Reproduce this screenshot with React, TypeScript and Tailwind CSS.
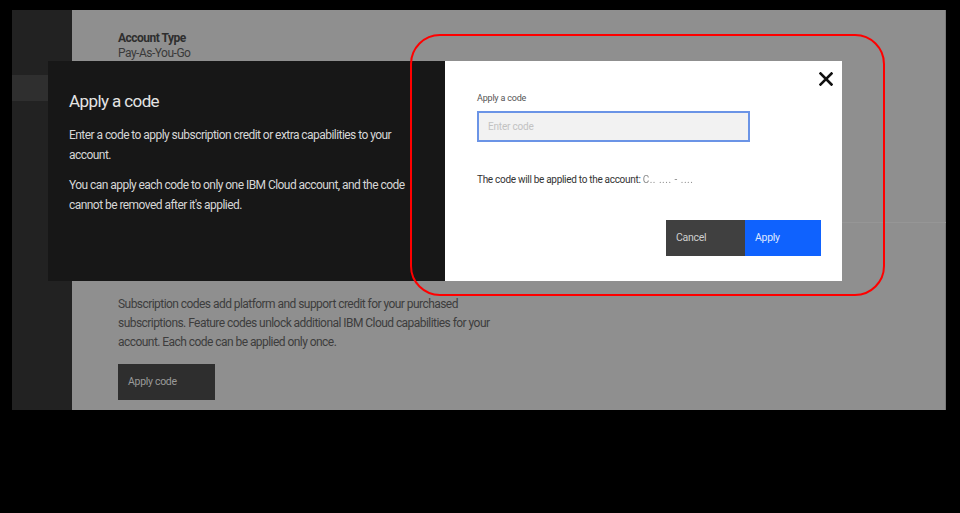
import React from "react";

const font = { fontFamily: 'Roboto, "Liberation Sans", sans-serif' };

export default function App() {
  return (
    <div className="w-[960px] h-[513px] bg-black relative overflow-hidden" style={font}>
      <div className="absolute left-[12px] top-[10px] w-[934px] h-[400px] flex">
        {/* sidebar */}
        <div className="w-[60px] bg-[#222222] flex flex-col">
          <div className="h-[65px]" />
          <div className="h-[26px] bg-[#2f2f2f]" />
        </div>
        {/* content */}
        <div className="flex-1 bg-[#8f8f8f] pl-[46px] flex flex-col border-r border-[#7a7a7a]">
          <div className="pt-[21px] text-[12px] leading-[15px] tracking-[-0.5px] text-[#2e2e2e] font-bold">Account Type</div>
          <div className="text-[12px] leading-[15px] tracking-[-0.5px] text-[#3a3a3a]">Pay-As-You-Go</div>
          <div className="mt-[234px] w-[372px] text-[12px] leading-[19px] tracking-[-0.55px] text-[#3d3d3d]">
            Subscription codes add platform and support credit for your purchased subscriptions. Feature codes unlock additional IBM Cloud capabilities for your account. Each code can be applied only once.
          </div>
          <div className="mt-[12px] w-[97px] h-[36px] bg-[#2e2e2e] flex items-center pl-[10px] text-[10.5px] tracking-[-0.3px] text-[#9a9a9a]">
            Apply code
          </div>
        </div>
      </div>

      {/* faint divider behind modal */}
      <div className="absolute left-[842px] top-[222px] w-[104px] h-px bg-[#969696]" />

      {/* modal */}
      <div className="absolute left-[48px] top-[61px] w-[794px] h-[220px] flex">
        <div className="w-[397px] bg-[#171717] pl-[21px] pr-[40px] pt-[30px]">
          <div className="text-[17px] leading-[20px] tracking-[-0.6px] text-[#e4e4e4]">Apply a code</div>
          <div className="mt-[14px] text-[12px] leading-[20px] tracking-[-0.55px] text-[#d6d6d6]">
            Enter a code to apply subscription credit or extra capabilities to your account.
          </div>
          <div className="mt-[10px] text-[12px] leading-[20px] tracking-[-0.55px] text-[#d6d6d6]">
            You can apply each code to only one IBM Cloud account, and the code cannot be removed after it's applied.
          </div>
        </div>
        <div className="flex-1 bg-white relative pl-[32px] pt-[31px]">
          <svg className="absolute right-[9px] top-[11px]" width="14" height="14" viewBox="0 0 14 14">
            <path d="M1.5 1.5 L12.5 12.5 M12.5 1.5 L1.5 12.5" stroke="#111" strokeWidth="2.6" strokeLinecap="square" />
          </svg>
          <div className="text-[9px] leading-[12px] tracking-[-0.2px] text-[#555555]">Apply a code</div>
          <div className="mt-[7px] w-[273px] h-[31px] bg-[#f2f2f2] border-2 border-[#6b94e6] flex items-center pl-[9px] text-[10px] tracking-[-0.2px] text-[#c2c2c2]">
            Enter code
          </div>
          <div className="mt-[31px] flex items-center text-[10px] leading-[14px] tracking-[-0.3px] text-[#333333]">
            <span>The code will be applied to the account:&nbsp;</span>
            <span className="text-[#8a8a8a] blur-[0.6px] tracking-[0.5px]">C.. ....  - ....</span>
          </div>
          <div className="absolute left-[221px] top-[159px] flex">
            <div className="w-[79px] h-[36px] bg-[#404040] flex items-center pl-[10px] text-[10.5px] tracking-[-0.3px] text-[#cfcfcf]">Cancel</div>
            <div className="w-[76px] h-[36px] bg-[#0f62fe] flex items-center pl-[10px] text-[10.5px] tracking-[-0.3px] text-[#dfe8ff]">Apply</div>
          </div>
        </div>
      </div>

      {/* red annotation ring */}
      <div className="absolute left-[410px] top-[34px] w-[475px] h-[262px] rounded-[30px] border-2 border-[#ff0000]" />
    </div>
  );
}
